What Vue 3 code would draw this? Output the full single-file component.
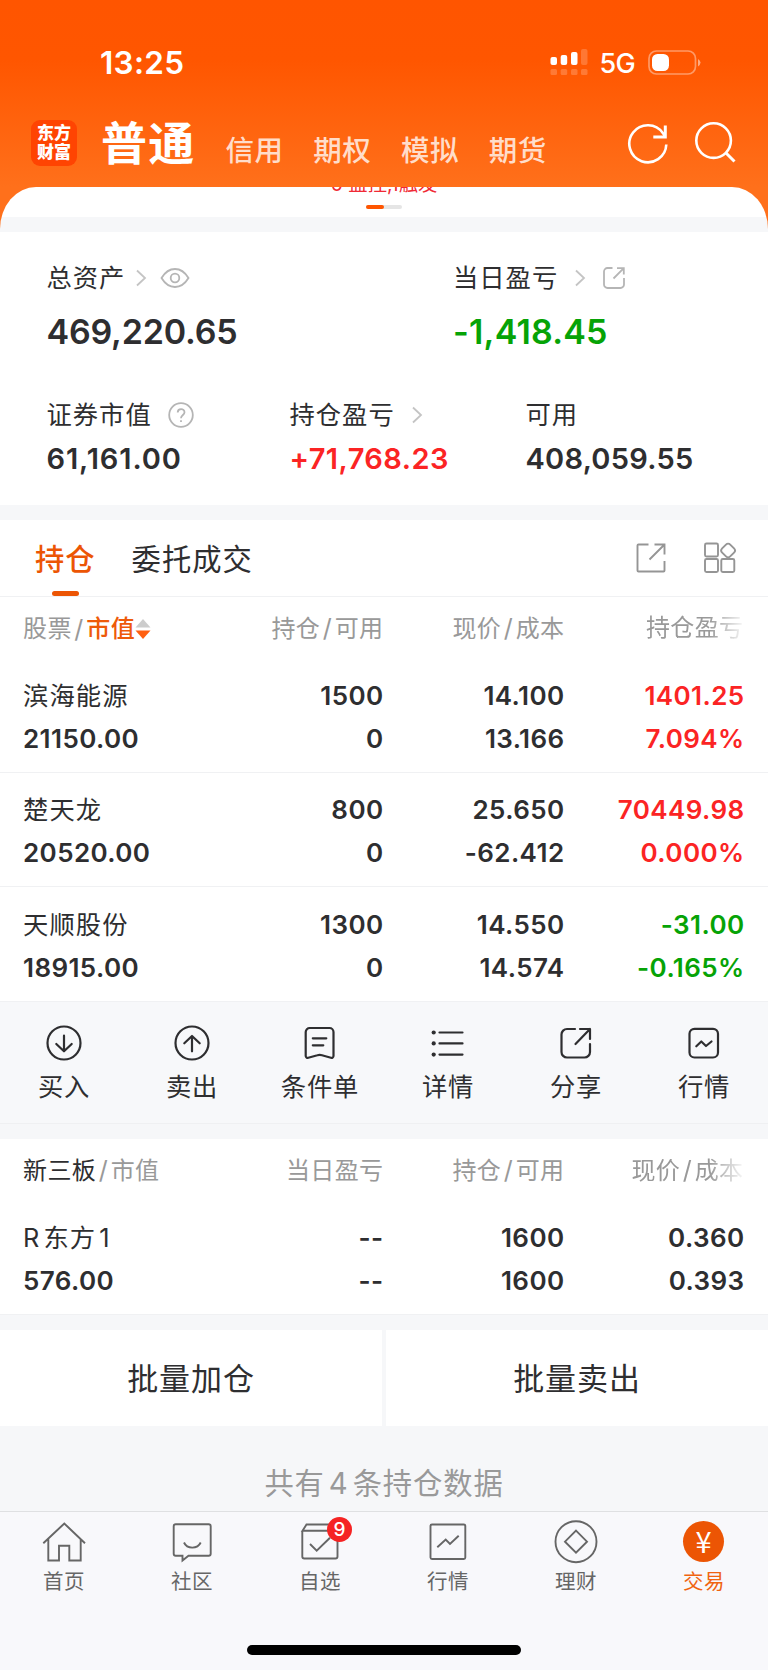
<script setup>
const markets = ['信用', '期权', '模拟', '期货'];

const holdings = [
    { name: '滨海能源', value: '21150.00', amount: '1500', usable: '0', price: '14.100', cost: '13.166', profit: '1401.25', rate: '7.094%', trend: 'up' },
    { name: '楚天龙', value: '20520.00', amount: '800', usable: '0', price: '25.650', cost: '-62.412', profit: '70449.98', rate: '0.000%', trend: 'up' },
    { name: '天顺股份', value: '18915.00', amount: '1300', usable: '0', price: '14.550', cost: '14.574', profit: '-31.00', rate: '-0.165%', trend: 'down' }
];

const actions = [
    { label: '买入', d: 'M36.5 20a16.5 16.5 0 1 1-33 0a16.5 16.5 0 1 1 33 0zM20 12.7V28M12.3 21L20 28.3L27.7 21' },
    { label: '卖出', d: 'M36.5 20a16.5 16.5 0 1 1-33 0a16.5 16.5 0 1 1 33 0zM20 28.3V13M12.3 20.3L20 13L27.7 20.3' },
    { label: '条件单', d: 'M9.7 5H29.5a4 4 0 0 1 4 4V33a2 2 0 0 1-2.6 1.8L22 32.3Q19.7 31.6 17.4 32.3L8.3 34.8A2 2 0 0 1 5.7 33V9a4 4 0 0 1 4-4zM12.8 15.3H26.3M12.8 22.3H23.3' },
    { label: '详情', d: 'M11.5 9.5H34.5M11.5 20.4H34.5M11.5 31.6H34.5', dots: [9.5, 20.4, 31.6] },
    { label: '分享', d: 'M19 6H11a5.5 5.5 0 0 0-5.5 5.5V29a5.5 5.5 0 0 0 5.5 5.5H28.5a5.5 5.5 0 0 0 5.5-5.5V21M24 6H34V16M34 6L19.5 21' },
    { label: '行情', d: 'M10.5 5.8H29a5 5 0 0 1 5 5V29.5a5 5 0 0 1-5 5H10.5a5 5 0 0 1-5-5V10.8a5 5 0 0 1 5-5zM12.3 23.3L17.3 18.5L22 23L27.5 18.5' }
];

const tabs = [
    { label: '首页', d: 'M3.3 25.3L24.3 5.5L45 25.3M8.3 21V42.5H19V27.7H29.3V42.5H40.7V21' },
    { label: '社区', d: 'M7.7 6.3H40.7a2 2 0 0 1 2 2V35.7a2 2 0 0 1-2 2H20.5L14.5 42.5V37.7H7.7a2 2 0 0 1-2-2V8.3a2 2 0 0 1 2-2zM16 24.5C19 31.3 29.5 31.3 32.7 24.5' },
    { label: '自选', d: 'M6.3 13V38.5a2 2 0 0 0 2 2H39.5a2 2 0 0 0 2-2V12.8H6.5L10.5 6.5H38L41.5 12.8M14 26L20.7 32.7L34 19.7', badge: 9 },
    { label: '行情', d: 'M8 6.5H39.8a1.5 1.5 0 0 1 1.5 1.5V39.5a1.5 1.5 0 0 1-1.5 1.5H8a1.5 1.5 0 0 1-1.5-1.5V8a1.5 1.5 0 0 1 1.5-1.5zM13.3 29.3L21.7 21.5L26 26L34.7 17.7' },
    { label: '理财', d: 'M44.5 23.7a20.5 20.5 0 1 1-41 0a20.5 20.5 0 1 1 41 0zM24 12.7L35 23.7L24 34.7L13 23.7z' },
    { label: '交易', active: true }
];
</script>

<template>
    <div class="screen">
        <header class="top">
            <div class="status">
                <span class="time">13:25</span>
                <svg class="signal" width="38" height="28" viewBox="0 0 38 28" fill="#fff">
                    <rect x="0.5" y="9" width="6.5" height="8" rx="2" />
                    <rect x="10.7" y="7" width="6.5" height="10" rx="2" />
                    <rect x="21" y="4" width="6.5" height="13" rx="2" />
                    <rect x="31" y="1" width="6.5" height="16" rx="2" opacity="0.2" />
                    <g opacity="0.2">
                        <rect x="0.5" y="21" width="6.5" height="6" rx="1.5" />
                        <rect x="10.7" y="21" width="6.5" height="6" rx="1.5" />
                        <rect x="21" y="21" width="6.5" height="6" rx="1.5" />
                        <rect x="31" y="21" width="6.5" height="6" rx="1.5" />
                    </g>
                </svg>
                <span class="network">5G</span>
                <svg class="battery" width="54" height="26" viewBox="0 0 54 26">
                    <rect x="1" y="1" width="46.5" height="23" rx="7.5" fill="none" stroke="#fff" stroke-opacity="0.4" stroke-width="1.7" />
                    <rect x="4" y="4" width="17" height="17" rx="5.5" fill="#fff" />
                    <path d="M50 9Q52.5 10.5 52.5 12.5T50 16.5z" fill="#fff" opacity="0.5" />
                </svg>
            </div>
            <nav class="markets">
                <div class="logo"><span>东方</span><span>财富</span></div>
                <strong>普通</strong>
                <span v-for="market in markets" :key="market" class="market">{{ market }}</span>
                <svg class="refresh" width="44" height="44" viewBox="0 0 44 44" fill="none" stroke="#fff" stroke-width="2.6">
                    <path d="M40.3 22.5A18.5 18.5 0 1 1 37 11.2L39 14.5" />
                    <path d="M27.3 15H39.3V3.5" stroke-width="3" />
                </svg>
                <svg class="search" width="44" height="44" viewBox="0 0 44 44" fill="none" stroke="#fff" stroke-width="2.6">
                    <circle cx="19.6" cy="19.6" r="17.3" />
                    <path d="M31.5 31.5L40.5 40.5" stroke-width="3" />
                </svg>
            </nav>
            <div class="sheet">
                <div class="notice">0 监控,1触发</div>
                <div class="pager"><i></i></div>
            </div>
        </header>

        <section class="summary">
            <div class="line label">
                <div class="half">总资产
                    <svg class="chevron" width="12" height="18" viewBox="0 0 12 18"><path d="M2 1.5L10 9L2 16.5" /></svg>
                    <svg class="eye" width="30" height="22" viewBox="0 0 30 22">
                        <path d="M1.5 11Q7 2 15 2T28.5 11Q23 20 15 20T1.5 11z" />
                        <circle cx="15" cy="11" r="4.3" />
                    </svg>
                </div>
                <div class="half">当日盈亏
                    <svg class="chevron wide" width="12" height="18" viewBox="0 0 12 18"><path d="M2 1.5L10 9L2 16.5" /></svg>
                    <svg class="share" width="24" height="24" viewBox="0 0 24 24">
                        <path d="M10.5 2H5.5a3.5 3.5 0 0 0-3.5 3.5V18.5a3.5 3.5 0 0 0 3.5 3.5H18.5a3.5 3.5 0 0 0 3.5-3.5V12M15 2.2H21.8V8.5M21.8 2.2L11.5 12.5" />
                    </svg>
                </div>
            </div>
            <div class="line total">
                <div class="half">469,220.65</div>
                <div class="half down">-1,418.45</div>
            </div>
            <div class="line label second">
                <div class="c1">证券市值
                    <svg class="help" width="26" height="26" viewBox="0 0 26 26">
                        <circle cx="13" cy="13" r="11.8" />
                        <path d="M9.7 10.5C9.7 6 16.5 6 16.5 10.3C16.5 13 13 13 13 16.3M13 18.3V20" />
                    </svg>
                </div>
                <div class="c2">持仓盈亏
                    <svg class="chevron wide" width="12" height="18" viewBox="0 0 12 18"><path d="M2 1.5L10 9L2 16.5" /></svg>
                </div>
                <div>可用</div>
            </div>
            <div class="line amount">
                <div class="c1 spaced">61,161.00</div>
                <div class="c2 up">+71,768.23</div>
                <div>408,059.55</div>
            </div>
        </section>

        <section class="positions">
            <div class="switcher">
                <span class="current">持仓</span>
                <span class="other">委托成交</span>
                <svg width="32" height="32" viewBox="0 0 32 32">
                    <path d="M13.5 2.5H3.5a1 1 0 0 0-1 1V28.5a1 1 0 0 0 1 1H28.5a1 1 0 0 0 1-1V19M19.5 2.5H29.5V12.5M29.5 2.5L14.5 17.5" />
                </svg>
                <svg class="grid-icon" width="34" height="34" viewBox="0 0 34 34">
                    <rect x="2" y="2.5" width="13" height="13" rx="1.5" />
                    <rect x="2" y="18" width="13" height="13" rx="1.5" />
                    <rect x="18.3" y="18" width="13" height="13" rx="1.5" />
                    <rect x="19.4" y="3.8" width="11.4" height="11.4" rx="3" transform="rotate(45 25.1 9.5)" />
                </svg>
            </div>
            <div class="cols head">
                <div>股票<i class="slash">/</i><span class="sorted">市值</span>
                    <svg class="sort" width="16" height="22" viewBox="0 0 16 22">
                        <path d="M0.5 9.5L8 1L15.5 9.5z" fill="#ccc" />
                        <path d="M0.5 12.5L8 21L15.5 12.5z" fill="#ff5f10" />
                    </svg>
                </div>
                <div>持仓<i class="slash">/</i>可用</div>
                <div>现价<i class="slash">/</i>成本</div>
                <div class="fade">持仓盈亏</div>
            </div>
            <div v-for="item in holdings" :key="item.name" class="cols row">
                <div><span class="name">{{ item.name }}</span>{{ item.value }}</div>
                <div><span>{{ item.amount }}</span>{{ item.usable }}</div>
                <div><span>{{ item.price }}</span>{{ item.cost }}</div>
                <div :class="item.trend"><span>{{ item.profit }}</span>{{ item.rate }}</div>
            </div>
        </section>

        <div class="actions">
            <div v-for="action in actions" :key="action.label" class="action">
                <svg width="40" height="40" viewBox="0 0 40 40">
                    <path :d="action.d" />
                    <circle v-for="y in action.dots" :key="y" cx="5.7" :cy="y" r="2.1" class="dot" />
                </svg>
                <span>{{ action.label }}</span>
            </div>
        </div>

        <section class="otc">
            <div class="cols head">
                <div><span class="board">新三板</span><i class="slash">/</i>市值</div>
                <div>当日盈亏</div>
                <div>持仓<i class="slash">/</i>可用</div>
                <div class="fade">现价<i class="slash">/</i>成本</div>
            </div>
            <div class="cols row">
                <div><span class="name"><i class="letter">R</i>东方<i class="digit">1</i></span>576.00</div>
                <div><span>--</span>--</div>
                <div><span>1600</span>1600</div>
                <div><span>0.360</span>0.393</div>
            </div>
        </section>

        <div class="batch">
            <div>批量加仓</div>
            <div>批量卖出</div>
        </div>
        <div class="count">共有<i>4</i>条持仓数据</div>

        <footer class="tabbar">
            <div class="tabs">
                <div v-for="tab in tabs" :key="tab.label" class="tab" :class="{ active: tab.active }">
                    <div class="icon">
                        <span v-if="tab.active" class="yuan">¥</span>
                        <svg v-else width="48" height="48" viewBox="0 0 48 48"><path :d="tab.d" /></svg>
                        <b v-if="tab.badge" class="badge">{{ tab.badge }}</b>
                    </div>
                    <span>{{ tab.label }}</span>
                </div>
            </div>
            <div class="home-bar"></div>
        </footer>
    </div>
</template>

<style>
body {
    margin: 0;
    background: #f6f7f9;
}
</style>

<style scoped>
.screen {
    width: 768px;
    height: 1670px;
    overflow: hidden;
    display: flex;
    flex-direction: column;
    background: #f6f7f9;
    color: #2e2e30;
    font-family: Inter, "Noto Sans CJK SC", sans-serif;
}

.screen * {
    box-sizing: border-box;
}

.screen > * {
    flex: none;
}

svg {
    display: block;
    flex: none;
}

i {
    font-style: normal;
}

.up {
    color: #fb2424;
}

.down {
    color: #06a306;
}

/* header */
.top {
    height: 232px;
    background: linear-gradient(#ff5500 0, #ff5600 60px, #ff701b 187px, #ff701b);
    color: #fff;
}

.status {
    display: flex;
    align-items: center;
    height: 100px;
    padding: 25px 66px 0 100px;
}

.time {
    flex: 1;
    font-size: 31.5px;
    font-weight: 600;
    letter-spacing: 0.3px;
}

.network {
    margin: 2px 13px 0 12px;
    font-size: 27px;
    font-weight: 500;
    letter-spacing: -0.7px;
}

.signal {
    margin-top: -1px;
}

.markets {
    display: flex;
    align-items: center;
    height: 87px;
    padding: 0 30px 0 31px;
}

.markets strong {
    margin: -2px 30px 0 24px;
    font-size: 46px;
    line-height: 60px;
    font-weight: 700;
    letter-spacing: 1.3px;
}

.market {
    width: 87.7px;
    margin-top: 14px;
    font-size: 28.5px;
    line-height: 40px;
    font-weight: 500;
    letter-spacing: 0.5px;
    color: #ffddca;
}

.logo {
    display: flex;
    flex-direction: column;
    justify-content: center;
    width: 46px;
    height: 46px;
    margin-top: -1px;
    border-radius: 9px;
    background: #ff4402;
    font-size: 17px;
    line-height: 19px;
    font-weight: 900;
    text-align: center;
}

.refresh {
    margin-left: auto;
}

.search {
    margin: -1px 0 0 24px;
}

.sheet {
    height: 45px;
    overflow: hidden;
    border-radius: 36px 36px 0 0 / 42px 42px 0 0;
    background: linear-gradient(#fff 30px, #f6f7f9 30px);
}

.notice {
    margin-top: -15px;
    font-size: 19.3px;
    line-height: 24px;
    text-align: center;
    color: #f02a35;
}

.pager {
    width: 36px;
    height: 4px;
    margin: 9px auto 0;
    border-radius: 2px;
    background: #e5e5e5;
}

.pager i {
    display: block;
    width: 18px;
    height: 4px;
    border-radius: 2px;
    background: #ff5500;
}

/* account summary */
.summary {
    height: 273px;
    padding: 26px 0 0 46.5px;
    background: #fff;
}

.line {
    display: flex;
}

.line > div {
    display: flex;
    flex: none;
    align-items: center;
}

.line svg {
    fill: none;
    stroke: #b5b5b5;
    stroke-width: 1.8;
}

.half {
    width: 406.5px;
}

.half:last-child {
    width: 300px;
}

.c1 {
    width: 243px;
}

.c2 {
    width: 236px;
}

.label {
    height: 40px;
    font-size: 25.3px;
    line-height: 40px;
    letter-spacing: 1px;
}

.line .chevron {
    margin-left: 10px;
    stroke: #c4c4c4;
}

.line .chevron.wide {
    margin-left: 16px;
}

.eye {
    margin-left: 13px;
}

.share {
    margin-left: 16px;
}

.help {
    margin-left: 16px;
}

.total {
    height: 66px;
    font-size: 34px;
    font-weight: 600;
    letter-spacing: -0.2px;
}

.total .down {
    letter-spacing: 0.2px;
}

.second {
    margin-top: 31px;
}

.amount {
    height: 46px;
    font-size: 29px;
    font-weight: 600;
    letter-spacing: 0.25px;
}

.spaced {
    letter-spacing: 0.9px;
}

.amount .up {
    letter-spacing: 0.45px;
}

/* holdings table */
.positions {
    margin-top: 15px;
    background: #fff;
}

.switcher {
    display: flex;
    align-items: center;
    height: 77px;
    padding: 0 31px 0 35px;
    border-bottom: 1px solid #f0f1f3;
    font-size: 29.3px;
    line-height: 80px;
    letter-spacing: 1px;
}

.switcher svg {
    fill: none;
    stroke: #959595;
    stroke-width: 1.9;
}

.current {
    display: flex;
    flex-direction: column;
    align-items: center;
    height: 76px;
    font-weight: 500;
    color: #ec5504;
}

.current::after {
    content: "";
    width: 27px;
    height: 5px;
    margin-top: -9px;
    border-radius: 2.5px;
    background: #ec5504;
}

.other {
    flex: 1;
    height: 76px;
    margin-left: 36px;
}

.switcher .grid-icon {
    margin-left: 36px;
}

.cols {
    display: grid;
    grid-template-columns: 204.5px 156px 181px 180px;
    padding: 0 23px;
    text-align: right;
}

.cols > :first-child {
    text-align: left;
}

.head {
    height: 61px;
    font-size: 24px;
    line-height: 62px;
    letter-spacing: 0.4px;
    color: #999;
}

.head > :first-child {
    display: flex;
    align-items: center;
}

.slash {
    margin: 0 2.5px;
    font-size: 25px;
}

.sorted {
    font-weight: 500;
    color: #ee5a0a;
}

.board {
    color: #2e2e30;
}

.fade {
    padding-right: 1px;
    -webkit-mask-image: linear-gradient(90deg, #000 144px, rgba(0, 0, 0, 0.15) 176px);
    mask-image: linear-gradient(90deg, #000 144px, rgba(0, 0, 0, 0.15) 176px);
}

.row {
    height: 114.7px;
    padding-top: 15.6px;
    border-bottom: 1px solid #f0f1f3;
    font-size: 26px;
    line-height: 43px;
    font-weight: 600;
    letter-spacing: 0.4px;
}

.row span {
    display: block;
}

.row .name {
    font-size: 25.3px;
    font-weight: 400;
    letter-spacing: 1.1px;
}

.letter {
    margin-right: 3px;
}

.digit {
    margin-left: 3px;
}

/* quick actions */
.actions {
    display: flex;
    height: 121.9px;
    padding-top: 20.9px;
    border-bottom: 1px solid #eff0f2;
    background: #f7f8fa;
}

.action {
    display: flex;
    flex-direction: column;
    align-items: center;
    width: 128px;
    font-size: 25.3px;
    line-height: 48px;
    letter-spacing: 0.8px;
}

.action svg {
    fill: none;
    stroke: #2e2e30;
    stroke-width: 2.2;
    stroke-linecap: round;
    stroke-linejoin: round;
}

.action .dot {
    fill: #2e2e30;
    stroke: none;
}

.otc {
    margin-top: 15px;
    background: #fff;
}

.otc .head {
    line-height: 63px;
}

.otc .row {
    height: 115px;
    padding-top: 16px;
}

.batch {
    display: flex;
    gap: 4px;
    margin-top: 15px;
}

.batch div {
    flex: 1;
    height: 96px;
    background: #fff;
    font-size: 31px;
    line-height: 98px;
    letter-spacing: 0.9px;
    text-align: center;
}

.count {
    height: 85px;
    font-size: 29.3px;
    line-height: 116px;
    letter-spacing: 0.9px;
    text-align: center;
    color: #999;
}

.count i {
    margin: 0 4px;
}

/* bottom navigation */
.tabbar {
    height: 159px;
    border-top: 1px solid #dfe0e2;
    background: #f8f8fb;
}

.tabs {
    display: flex;
    height: 133px;
    padding-top: 6px;
}

.tab {
    display: flex;
    flex-direction: column;
    align-items: center;
    width: 128px;
    font-size: 20.5px;
    line-height: 32px;
    letter-spacing: 0.5px;
    color: #666;
}

.icon {
    position: relative;
    height: 48px;
}

.icon svg {
    fill: none;
    stroke: #666;
    stroke-width: 1.9;
}

.badge {
    position: absolute;
    top: -1px;
    right: -8px;
    width: 25px;
    height: 25px;
    border-radius: 50%;
    background: #f52323;
    color: #fff;
    font-size: 19px;
    font-weight: 500;
    line-height: 26px;
    letter-spacing: 0;
    text-align: center;
}

.tab.active {
    color: #f06410;
}

.yuan {
    display: block;
    width: 41px;
    height: 41px;
    margin: 3px 1px 0 0;
    border-radius: 50%;
    background: #ec5504;
    color: #fff;
    font-family: "Noto Sans CJK SC", sans-serif;
    font-size: 29px;
    line-height: 38px;
    letter-spacing: 0;
    text-align: center;
}

.home-bar {
    width: 274px;
    height: 10px;
    margin: 0 auto;
    border-radius: 5px;
    background: #000;
}
</style>
